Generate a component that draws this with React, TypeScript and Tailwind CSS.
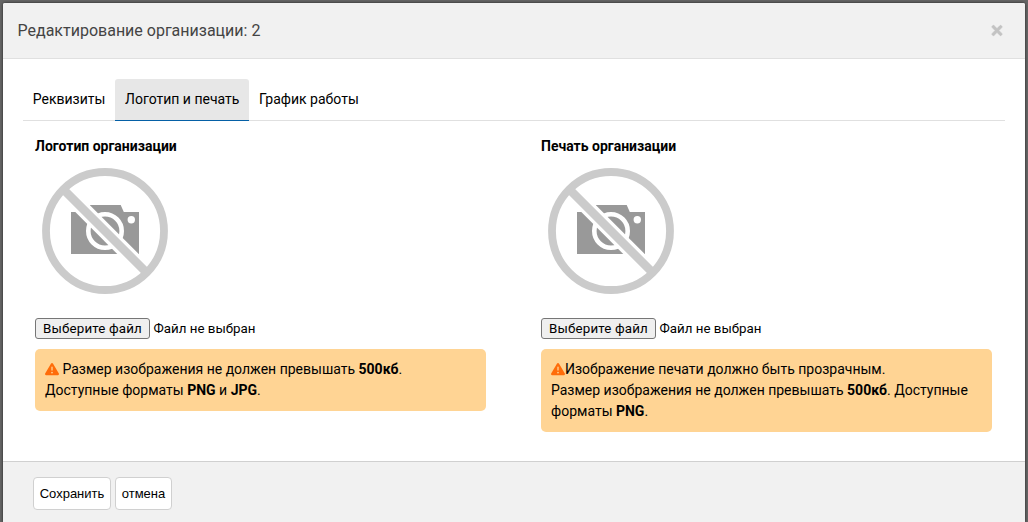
import React, { useState } from 'react';
import { FaTimes } from 'react-icons/fa';
import { FaTriangleExclamation } from 'react-icons/fa6';
import { clsx } from 'clsx';

const TABS = ['Реквизиты', 'Логотип и печать', 'График работы'];

function NoPhoto() {
  return (
    <svg width="140" height="140" viewBox="0 0 140 140" className="block" aria-label="Нет изображения">
      <path d="M36 51H55V44H85.7L88.8 51H104V93H36Z" fill="#999" />
      <circle cx="70" cy="70" r="16.7" fill="none" stroke="#fff" strokeWidth="4.6" />
      <circle cx="96.3" cy="58.8" r="3.7" fill="#fff" />
      <path d="M28 28L112 112" stroke="#fff" strokeWidth="15.2" />
      <path d="M29 29L111 111" stroke="#cbcbcb" strokeWidth="8.6" />
      <circle cx="70" cy="70" r="59" fill="none" stroke="#cbcbcb" strokeWidth="7.8" />
    </svg>
  );
}

function FilePicker() {
  return (
    <div className="mt-[17px] flex h-[21px] items-center text-[13.333px]">
      <button className="h-[21px] w-[115px] rounded-[3px] border border-[#767676] bg-[#efefef] leading-[17px] tracking-[0.15px] whitespace-nowrap">
        Выберите файл
      </button>
      <span className="ml-[3.5px]">Файл не выбран</span>
    </div>
  );
}

function UploadBlock({ title, children }: { title: string; children: React.ReactNode }) {
  return (
    <section className="w-[451px]">
      <h3 className="h-[21px] leading-[21px] font-bold">{title}</h3>
      <div className="mt-1">
        <NoPhoto />
      </div>
      <FilePicker />
      <div className="mt-[10px] rounded-[5px] bg-[#ffd494] p-[10px] leading-[21px]">{children}</div>
    </section>
  );
}

function WarningIcon() {
  return <FaTriangleExclamation className="inline-block size-[14px] align-[-2px] text-[#ff6c0a]" />;
}

export default function App() {
  const [activeTab, setActiveTab] = useState(1);

  return (
    <div className="h-[522px] w-[1028px] overflow-hidden bg-[#666] px-[3px] pt-[3px] font-[Roboto,sans-serif] text-sm text-black">
      <div className="flex h-[519px] w-[1022px] flex-col rounded-t-[2px] bg-white shadow-[0_0_3px_rgba(0,0,0,0.7)]">
        <header className="flex h-14 items-center justify-between rounded-t-[2px] border-b border-[#e0e0e0] bg-[#f1f1f1] pr-[22px] pl-[14.5px]">
          <h2 className="text-base text-[#444]">Редактирование организации: 2</h2>
          <button aria-label="Закрыть">
            <FaTimes className="h-[15px] w-[12px] stroke-[#c3c3c3] stroke-[20px] text-[#c3c3c3]" />
          </button>
        </header>

        <main className="h-[402px] px-5 pt-5">
          <nav className="flex h-[42px] border-b border-[#e0e0e0]">
            {TABS.map((tab, i) => (
              <button
                key={tab}
                onClick={() => setActiveTab(i)}
                className={clsx(
                  'h-[42px] rounded-t-[3px] border-b px-[9.8px] pb-[2px] whitespace-nowrap',
                  i === activeTab ? 'border-[#0560a6] bg-[#e7e7e7]' : 'border-transparent'
                )}
              >
                {tab}
              </button>
            ))}
          </nav>

          <div className="flex gap-[55px] pt-[15px] pl-3">
            <UploadBlock title="Логотип организации">
              <WarningIcon /> Размер изображения не должен превышать <b>500кб</b>.
              <br />
              Доступные форматы <b>PNG</b> и <b>JPG</b>.
            </UploadBlock>
            <UploadBlock title="Печать организации">
              <WarningIcon />
              Изображение печати должно быть прозрачным.
              <br />
              Размер изображения не должен превышать <b>500кб</b>. Доступные форматы <b>PNG</b>.
            </UploadBlock>
          </div>
        </main>

        <footer className="flex flex-1 items-start gap-1 border-t border-[#d0d0d0] bg-[#f1f1f1] px-[30px] pt-[15px] font-['Liberation_Sans',Arial,sans-serif] text-[13px]">
          <button className="h-[33px] w-[78px] rounded-[4px] border border-[#d0d0d0] bg-white pt-[2px] whitespace-nowrap">
            Сохранить
          </button>
          <button className="h-[33px] w-[57px] rounded-[4px] border border-[#d0d0d0] bg-white pt-[2px] whitespace-nowrap">
            отмена
          </button>
        </footer>
      </div>
    </div>
  );
}
